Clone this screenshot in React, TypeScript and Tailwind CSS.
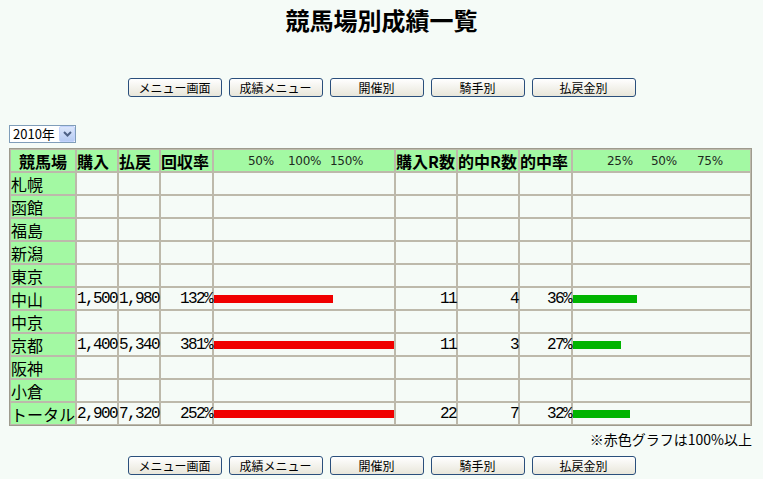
import React from 'react'

type Row = {
  name: string
  buy?: string
  pay?: string
  rate?: number
  races?: number
  hits?: number
  hitRate?: number
}

const ROWS: Row[] = [
  { name: '札幌' },
  { name: '函館' },
  { name: '福島' },
  { name: '新潟' },
  { name: '東京' },
  { name: '中山', buy: '1,500', pay: '1,980', rate: 132, races: 11, hits: 4, hitRate: 36 },
  { name: '中京' },
  { name: '京都', buy: '1,400', pay: '5,340', rate: 381, races: 11, hits: 3, hitRate: 27 },
  { name: '阪神' },
  { name: '小倉' },
  { name: 'トータル', buy: '2,900', pay: '7,320', rate: 252, races: 22, hits: 7, hitRate: 32 },
]

const MENU = [
  { label: 'メニュー画面', w: 'w-[94px]' },
  { label: '成績メニュー', w: 'w-[94px]' },
  { label: '開催別', w: 'w-[94px]' },
  { label: '騎手別', w: 'w-[94px]' },
  { label: '払戻金別', w: 'w-[104px]' },
]

const jp = "font-['Noto_Sans_CJK_JP',sans-serif]"
const num = "font-['Liberation_Mono','Noto_Sans_CJK_JP',monospace] text-[16px] leading-[18px] tracking-[-1.6px] text-right text-black"
const cell = 'border border-[#bdb9ab] p-0 h-[23px]'
const head = `${cell} bg-[#a3f9a3] font-bold text-[16px] leading-[20px] text-black`
const scaleLabel = "absolute top-[4px] text-[12px] leading-[14px] font-['DejaVu_Sans',sans-serif] font-normal text-[#1e2a1e] tracking-[-0.3px]"

function MenuButtons() {
  return (
    <div className="flex justify-center gap-[7px]">
      {MENU.map(m => (
        <button
          key={m.label}
          className={`${m.w} h-[19px] rounded-[3px] border border-[#2a4f7c] bg-gradient-to-b from-white to-[#e8e6da] text-[12px] leading-[15px] text-black ${jp}`}
        >
          {m.label}
        </button>
      ))}
    </div>
  )
}

function Bar({ value, scale, color }: { value?: number; scale: number; color: string }) {
  if (value === undefined) return null
  const w = Math.min(Math.round(value * scale), 180)
  return <div className={`h-[8px] ${color}`} style={{ width: w }} />
}

export default function App() {
  return (
    <div className={`w-[763px] h-[479px] bg-[#f5fbf7] overflow-hidden ${jp}`}>
      <h1 className="pt-[6px] text-center text-[24px] leading-[28px] font-bold text-black">競馬場別成績一覧</h1>

      <div className="mt-[44px]">
        <MenuButtons />
      </div>

      {/* year picker */}
      <div className="mt-[28px] ml-[9px] flex items-center w-[67px] h-[18px] border border-[#7f9db9] bg-white">
        <span className="flex-1 pl-[3px] text-[13px] leading-[16px] text-black">2010年</span>
        <span className="w-[16px] h-[16px] flex items-center justify-center rounded-[2px] bg-gradient-to-b from-[#dbe6fb] to-[#b6cbf3] border border-[#c3d3fd]">
          <svg width="9" height="6" viewBox="0 0 9 6">
            <path d="M1 1 L4.5 4.5 L8 1" stroke="#4d6185" strokeWidth="2" fill="none" />
          </svg>
        </span>
      </div>

      <table className="mt-[5px] ml-[9px] w-[743px] table-fixed border-separate border-spacing-0 border border-[#9e9b8e]">
        <colgroup>
          <col className="w-[66px]" />
          <col className="w-[42px]" />
          <col className="w-[42px]" />
          <col className="w-[53px]" />
          <col className="w-[182px]" />
          <col className="w-[62px]" />
          <col className="w-[62px]" />
          <col className="w-[53px]" />
          <col className="w-[179px]" />
        </colgroup>
        <thead>
          <tr>
            <th className={`${head} text-center`}>競馬場</th>
            <th className={`${head} text-left`}>購入</th>
            <th className={`${head} text-left`}>払戻</th>
            <th className={`${head} text-left`}>回収率</th>
            <th className={`${head} relative`}>
              <span className={`${scaleLabel} left-[34px]`}>50%</span>
              <span className={`${scaleLabel} left-[74px]`}>100%</span>
              <span className={`${scaleLabel} left-[116px]`}>150%</span>
            </th>
            <th className={`${head} text-left whitespace-nowrap`}>購入R数</th>
            <th className={`${head} text-left whitespace-nowrap`}>的中R数</th>
            <th className={`${head} text-left`}>的中率</th>
            <th className={`${head} relative`}>
              <span className={`${scaleLabel} left-[34px]`}>25%</span>
              <span className={`${scaleLabel} left-[78px]`}>50%</span>
              <span className={`${scaleLabel} left-[124px]`}>75%</span>
            </th>
          </tr>
        </thead>
        <tbody>
          {ROWS.map(r => (
            <tr key={r.name}>
              <td className={`${cell} bg-[#a3f9a3] text-[16px] leading-[20px] text-black whitespace-nowrap overflow-hidden`}>{r.name}</td>
              <td className={`${cell} ${num}`}>{r.buy}</td>
              <td className={`${cell} ${num}`}>{r.pay}</td>
              <td className={`${cell} ${num}`}>{r.rate !== undefined ? `${r.rate}%` : ''}</td>
              <td className={cell}>
                <Bar value={r.rate} scale={0.9} color="bg-[#f00000]" />
              </td>
              <td className={`${cell} ${num}`}>{r.races}</td>
              <td className={`${cell} ${num}`}>{r.hits}</td>
              <td className={`${cell} ${num}`}>{r.hitRate !== undefined ? `${r.hitRate}%` : ''}</td>
              <td className={cell}>
                <Bar value={r.hitRate} scale={1.78} color="bg-[#00b400]" />
              </td>
            </tr>
          ))}
        </tbody>
      </table>

      <p className="mt-[4px] w-[752px] text-right text-[14px] leading-[18px] text-black">※赤色グラフは100%以上</p>

      <div className="mt-[8px]">
        <MenuButtons />
      </div>
    </div>
  )
}
